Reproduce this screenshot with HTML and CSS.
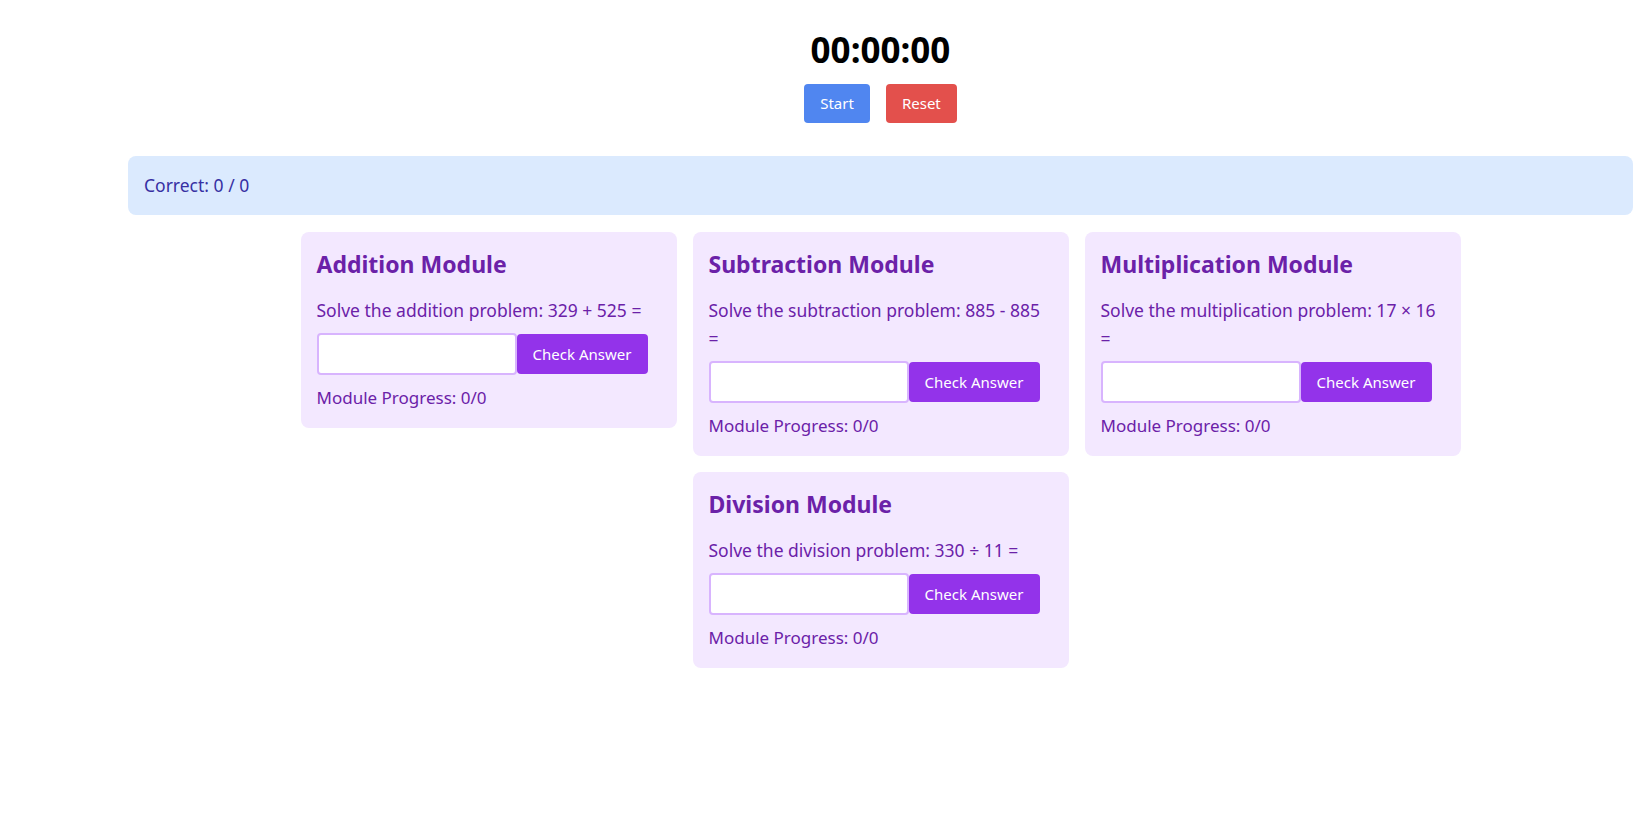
FILE: index.html
```html
<!DOCTYPE html>
<html lang="en">
<head>
<meta charset="utf-8">
<title>Math Modules</title>
<link rel="stylesheet" href="styles.css">
</head>
<body>
<div class="app">
  <header class="timer">
    <h1 class="clock">00:00:00</h1>
    <div class="controls">
      <button class="btn btn-start">Start</button>
      <button class="btn btn-reset">Reset</button>
    </div>
  </header>
  <section class="score">Correct: 0 / 0</section>
  <main class="modules">
    <div class="card">
      <h2 class="card-title">Addition Module</h2>
      <p class="problem">Solve the addition problem: 329 + 525 =</p>
      <div class="answer-row"><input class="answer" type="text"><button class="check">Check Answer</button></div>
      <p class="progress">Module Progress: 0/0</p>
    </div>
    <div class="card">
      <h2 class="card-title">Subtraction Module</h2>
      <p class="problem">Solve the subtraction problem: 885 - 885 =</p>
      <div class="answer-row"><input class="answer" type="text"><button class="check">Check Answer</button></div>
      <p class="progress">Module Progress: 0/0</p>
    </div>
    <div class="card">
      <h2 class="card-title">Multiplication Module</h2>
      <p class="problem">Solve the multiplication problem: 17 × 16 =</p>
      <div class="answer-row"><input class="answer" type="text"><button class="check">Check Answer</button></div>
      <p class="progress">Module Progress: 0/0</p>
    </div>
    <div class="card">
      <h2 class="card-title">Division Module</h2>
      <p class="problem">Solve the division problem: 330 ÷ 11 =</p>
      <div class="answer-row"><input class="answer" type="text"><button class="check">Check Answer</button></div>
      <p class="progress">Module Progress: 0/0</p>
    </div>
  </main>
</div>
</body>
</html>
```

FILE: styles.css
```css
body {
  margin: 8px;
  font-family: "Noto Sans", "Open Sans", sans-serif;
  background: #ffffff;
}

.app {
  padding-left: 120px;
}

.timer {
  padding-top: 22px;
  text-align: center;
}

.clock {
  margin: 0;
  font-size: 35px;
  line-height: 40px;
  font-weight: 700;
  color: #000;
}

.controls {
  margin-top: 14px;
  display: flex;
  justify-content: center;
  gap: 16px;
}

.btn {
  border: none;
  border-radius: 4px;
  padding: 8px 16px;
  font-family: inherit;
  font-size: 15px;
  line-height: 23px;
  color: #fff;
  cursor: pointer;
}

.btn-start { background: #5086f0; }
.btn-reset { background: #e3504c; }

.score {
  margin-top: 33px;
  background: #dbeafe;
  border-radius: 8px;
  padding: 16px;
  font-size: 17.5px;
  line-height: 27px;
  color: #3730a3;
}

.modules {
  margin-top: 17px;
  display: flex;
  flex-wrap: wrap;
  justify-content: center;
  align-items: flex-start;
  gap: 16px;
}

.card {
  width: 376px;
  box-sizing: border-box;
  padding: 16px;
  background: #f3e8ff;
  border-radius: 8px;
  color: #6b21a8;
}

.card-title {
  margin: 0 0 16px;
  font-size: 23px;
  line-height: 32px;
  font-weight: 700;
}

.problem {
  margin: 0 0 9px;
  font-size: 17.5px;
  line-height: 28px;
}

.answer-row {
  display: flex;
  align-items: center;
  margin-bottom: 9px;
}

.answer {
  width: 200px;
  height: 42px;
  box-sizing: border-box;
  border: 2px solid #d8b4fe;
  border-radius: 4px;
  background: #fff;
  padding: 8px;
  font-size: 16px;
}

.check {
  border: none;
  border-radius: 4px;
  background: #9333ea;
  color: #fff;
  font-family: inherit;
  font-size: 15px;
  line-height: 24px;
  padding: 8px 16px;
  width: 131px;
  cursor: pointer;
}

.progress {
  margin: 0;
  font-size: 17px;
  line-height: 28px;
}
```
